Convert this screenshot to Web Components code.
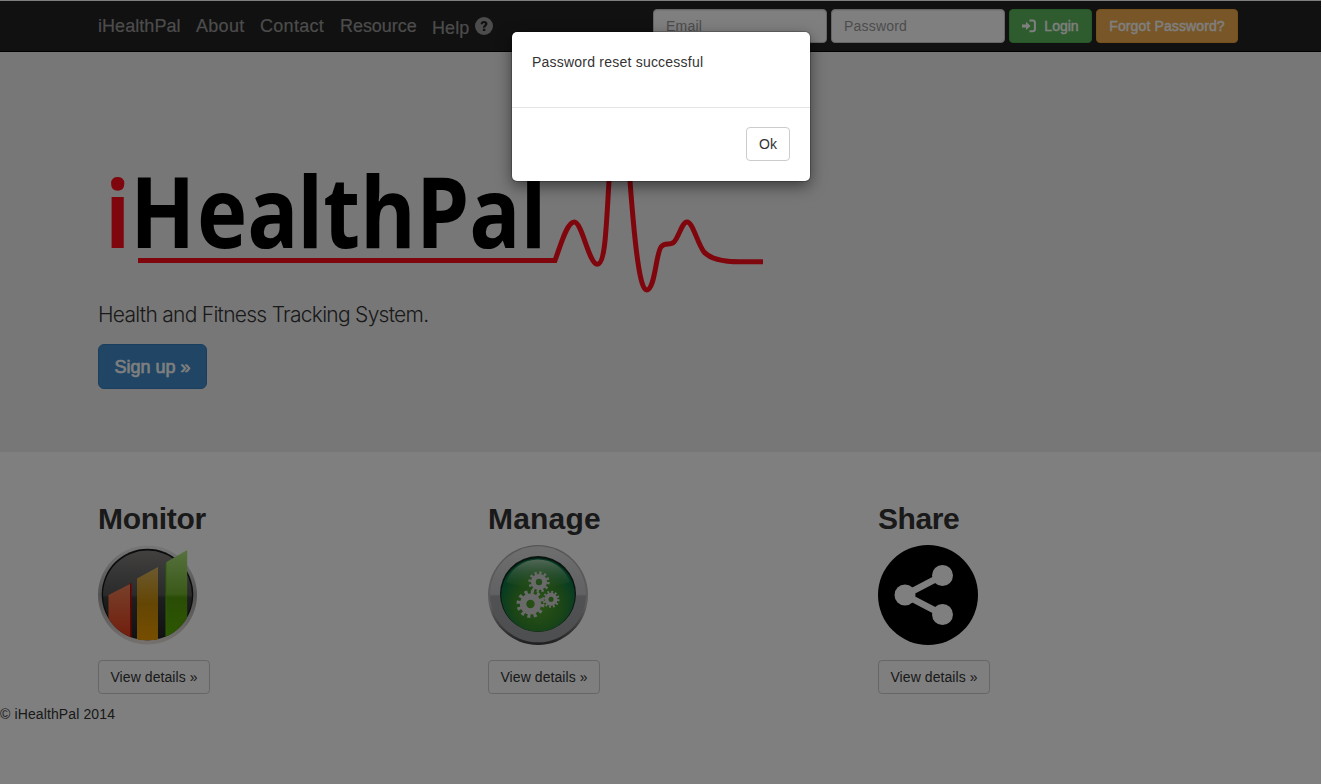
<!DOCTYPE html>
<html lang="en"><head><meta charset="utf-8"><title>iHealthPal</title>
<style>
html,body{margin:0;background:#fff;height:784px;overflow:hidden}
body{font:14px/20px "Liberation Sans",Arial,sans-serif;color:#333}
</style></head><body>
<hp-app></hp-app>
<script>
const define=(name,html)=>{
  const t=document.createElement('template');t.innerHTML=html;
  customElements.define(name,class extends HTMLElement{
    constructor(){super();this.attachShadow({mode:'open'}).append(t.content.cloneNode(true));}
  });
};

define('hp-button',`<style>
:host{display:inline-flex;box-sizing:border-box;height:34px;align-items:center;justify-content:center;border:1px solid var(--line,#ccc);border-radius:4px;background:var(--fill,#fff);color:var(--ink,#333);white-space:nowrap}
</style><slot></slot>`);

define('hp-field',`<style>
:host{display:block;width:174px;height:34px}
div{box-sizing:border-box;height:34px;padding:6px 12px;border:1px solid #ccc;border-radius:4px;background:#fff;color:#999;box-shadow:inset 0 1px 1px rgba(0,0,0,.075);letter-spacing:.2px}
</style><div><slot></slot></div>`);

define('hp-navbar',`<style>
:host{display:flex;box-sizing:border-box;height:51px;padding:8px 83px 0 98px;background:#222;border-bottom:1px solid #000;justify-content:space-between}
nav{display:flex;gap:15px;font-size:18px;line-height:34px;color:#999;white-space:nowrap;-webkit-text-stroke:.2px #999}
nav span{display:block}
.help{display:flex;gap:6px;padding-top:2px}
.help svg{margin-top:6px}
form{display:flex;gap:4px}
.b{-webkit-text-stroke:.4px currentColor}
.login{width:83px;--fill:#5cb85c;--line:#4cae4c;--ink:#fff}
.forgot{width:142px;--fill:#f0ad4e;--line:#eea236;--ink:#fff;letter-spacing:.12px}
.login svg{margin-right:7px}
</style>
<nav><span style="width:83px;letter-spacing:.05px">iHealthPal</span><span style="width:49px;letter-spacing:.3px">About</span><span style="width:65px;letter-spacing:.3px">Contact</span><span style="width:77px;letter-spacing:-.05px">Resource</span>
<span class="help"><span style="letter-spacing:.1px">Help</span><svg width="18" height="18" viewBox="0 0 18 18"><circle cx="9" cy="9" r="9" fill="#999"/><path d="M5.6 7.2C5.7 4.8 7 3.9 9.1 3.9c2 0 3.4 1.1 3.4 2.8 0 2.2-2.3 2.2-2.3 4H7.9c0-2.4 2-2.7 2-3.8 0-.6-.4-1-.9-1-.7 0-1.1.5-1.2 1.3zM7.9 11.8h2.4v2.2H7.9z" fill="#222" stroke="none"/></svg></span></nav>
<form><hp-field>Email</hp-field><hp-field>Password</hp-field>
<hp-button class="login b"><svg width="15" height="14" viewBox="0 0 15 14"><path d="M0 5.4h4V2.7l4.6 4.2L4 11.1V8.4H0z" fill="#fff" stroke="none"/><path d="M7.5 1.6h3.2a2.2 2.2 0 0 1 2.2 2.2v6.2a2.2 2.2 0 0 1-2.2 2.2H7.5" fill="none" stroke="#fff" stroke-width="2"/></svg>Login</hp-button><hp-button class="forgot b">Forgot Password?</hp-button></form>`);

define('hp-logo',`<style>:host{display:block;height:200px}svg{display:block}text{font:bold 98px "Open Sans",sans-serif}.i{font-size:94px}</style>
<svg width="680" height="200" viewBox="98 100 680 200">
<text transform="translate(105.2 248.3) scale(.867 1)" x="0" y="0"><tspan class="i" fill="#ff0c1a">i</tspan><tspan x="29" dx="0 2 0 -1.5 0 0 0 0 0" fill="#000">HealthPal</tspan></text>
<path d="M138 260.5H555C561 244 567 222 574.3 222C582 222 589 264.3 597.3 264.3C605 264.3 606 232 609 181C612 130 615 110 619 110C624 110 627 140 630 181C635 248 640 290 646.5 290C655 290 656 253 661 247C665 242 670 246 674 242C679 237 682 222 687 222C693 222 697 243 704 252C711 260 727 262 742 261.8H763" fill="none" stroke="#ff0c1a" stroke-width="5"/></svg>`);

define('hp-hero',`<style>
:host{display:block;box-sizing:border-box;height:400px;padding:48px 98px 0;background:#eee}
p{margin:1px 0 15px;font:300 21px/28px Inter,"Liberation Sans",sans-serif;letter-spacing:-.72px}
hp-button{width:109px;height:45px;font-size:18px;border-radius:6px;--fill:#428bca;--line:#357ebd;--ink:#fff;-webkit-text-stroke:.6px #fff}
</style><hp-logo></hp-logo><p>Health and Fitness Tracking System.</p><hp-button>Sign up »</hp-button>`);

define('hp-feature',`<style>
:host{display:flex;flex-direction:column;align-items:flex-start}
h2{margin:0 0 10px;font:bold 30px/33px "Liberation Sans",sans-serif;letter-spacing:var(--track,0)}
::slotted(svg){display:block;width:100px;height:100px;margin-bottom:15px}
hp-button{width:112px;letter-spacing:.07px}
</style><h2><slot name="title"></slot></h2><slot></slot><hp-button>View details »</hp-button>`);

define('hp-dialog',`<style>
:host{display:block;position:absolute;left:512px;top:32px;width:298px;height:149px;border-radius:5px;background:#fff;box-shadow:0 0 0 1px rgba(0,0,0,.2),0 5px 15px rgba(0,0,0,.5)}
.body{box-sizing:border-box;height:75px;padding:20px;letter-spacing:.22px}
.foot{border-top:1px solid #e5e5e5;padding:19px 20px;display:flex;justify-content:flex-end}
hp-button{width:44px}
</style><div class="body"><slot></slot></div><div class="foot"><hp-button>Ok</hp-button></div>`);

define('hp-app',`<style>
:host{display:block;position:relative;width:1321px;height:784px;overflow:hidden}
.page{padding-top:1px}
main{display:grid;grid-template-columns:repeat(3,390px);padding:50px 0 0 98px}
footer{margin-top:10px;letter-spacing:.12px}
.shade{position:absolute;inset:0;background:rgba(0,0,0,.5)}
</style>
<div class="page"><hp-navbar></hp-navbar><hp-hero></hp-hero>
<main>
<hp-feature style="--track:-.3px"><span slot="title">Monitor</span>
<svg viewBox="0 0 100 100"><defs>
<linearGradient id="rim" x2="0" y2="1"><stop stop-color="#eee"/><stop offset=".5" stop-color="#a5a3a2"/><stop offset="1" stop-color="#e9e2dd"/></linearGradient>
<linearGradient id="face" x2="0" y2="1"><stop stop-color="#858280"/><stop offset=".5" stop-color="#555"/><stop offset=".53" stop-color="#3c3c3c"/><stop offset="1" stop-color="#222"/></linearGradient>
<linearGradient id="r" x2="0" y2="1"><stop stop-color="#f08056"/><stop offset="1" stop-color="#e03410"/></linearGradient>
<linearGradient id="y" x2="0" y2="1"><stop stop-color="#d9b45e"/><stop offset=".5" stop-color="#c98c08"/><stop offset="1" stop-color="#ee9c00"/></linearGradient>
<linearGradient id="g" x2="0" y2="1"><stop stop-color="#aee47d"/><stop offset=".46" stop-color="#75b431"/><stop offset=".5" stop-color="#559a0c"/><stop offset="1" stop-color="#5bb300"/></linearGradient>
<clipPath id="disc"><path d="M0 0H100V50H95A45.5 45.5 0 0 1 4 50H0z"/></clipPath></defs>
<circle cx="49.5" cy="50" r="49.5" fill="url(#rim)"/><circle cx="49.5" cy="49.5" r="45.8" fill="#171717"/><circle cx="49.5" cy="50" r="44.5" fill="url(#face)"/>
<g clip-path="url(#disc)"><path d="M31 39L33.5 38V100H31z" fill="#c40b05"/><path d="M10.5 50L32 39V100H10.5z" fill="url(#r)"/><path d="M39 33.5L60 22V95.5H39z" fill="url(#y)"/><path d="M67.5 19L69 17V100H67.5z" fill="#52bc13"/><path d="M68.5 17L89.2 5V100H68.5z" fill="url(#g)"/></g></svg></hp-feature>
<hp-feature style="--track:.2px"><span slot="title">Manage</span>
<svg viewBox="0 0 100 100"><defs>
<linearGradient id="metal" x2="0" y2="1"><stop stop-color="#dedee0"/><stop offset=".5" stop-color="#c2c3c6"/><stop offset=".52" stop-color="#a2a3a7"/><stop offset="1" stop-color="#9c9da0"/></linearGradient>
<linearGradient id="edge" x2="0" y2="1"><stop stop-color="#aaa"/><stop offset=".6" stop-color="#b9b9b9"/><stop offset="1" stop-color="#3d3d3d"/></linearGradient>
<radialGradient id="green" cy=".62" r=".55"><stop stop-color="#57a62b"/><stop offset=".6" stop-color="#378b2d"/><stop offset="1" stop-color="#087448"/></radialGradient>
<linearGradient id="gloss" x2="0" y2="1"><stop stop-color="#cee5c9" stop-opacity=".8"/><stop offset="1" stop-color="#72b64b" stop-opacity=".05"/></linearGradient>
<g id="cog"><circle r="7.4" fill="none" stroke="#d5d5d5" stroke-width="6.4"/><circle r="12" fill="none" stroke="#d5d5d5" stroke-width="4" stroke-dasharray="3 3.283"/></g></defs>
<circle cx="50" cy="50" r="50" fill="url(#edge)"/><circle cx="50" cy="49.3" r="48" fill="url(#metal)"/><circle cx="50" cy="49" r="38" fill="#15291d"/><circle cx="50" cy="50" r="36.8" fill="url(#green)"/><path d="M18 37A34 34 0 0 1 82 37Q50 49 18 37z" fill="url(#gloss)"/>
<use href="#cog" transform="translate(42.5 59)"/><use href="#cog" transform="translate(51 37) scale(.76)"/><use href="#cog" transform="translate(63 54.3) scale(.61)"/></svg></hp-feature>
<hp-feature style="--track:-.4px"><span slot="title">Share</span>
<svg viewBox="0 0 100 100"><circle cx="50" cy="50" r="50"/><g fill="#fff"><circle cx="27" cy="50" r="10.5"/><circle cx="64.5" cy="30.5" r="10.5"/><circle cx="64.5" cy="69.5" r="10.5"/></g><path d="M64.5 30.5L27 50L64.5 69.5" fill="none" stroke="#fff" stroke-width="6.5"/></svg></hp-feature>
</main><footer>© iHealthPal 2014</footer></div>
<div class="shade"></div><hp-dialog>Password reset successful</hp-dialog>`);
</script></body></html>
